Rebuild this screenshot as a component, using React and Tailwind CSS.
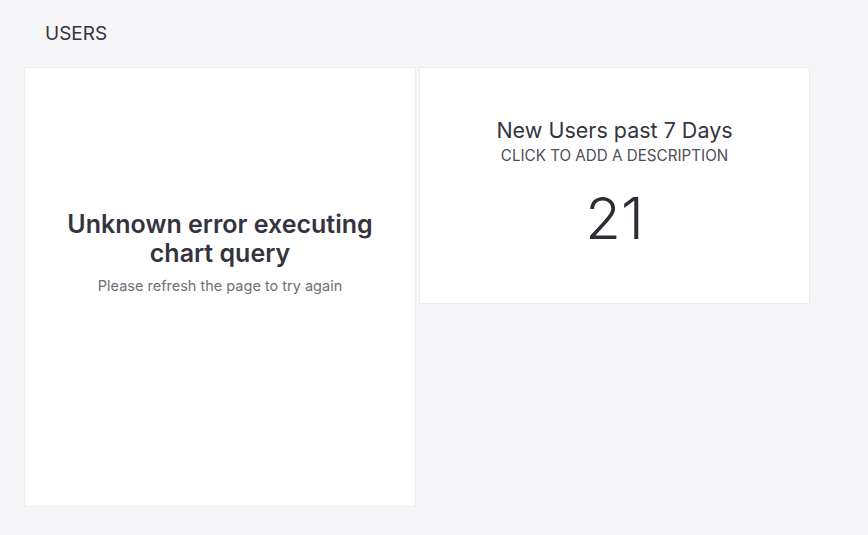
export default function App() {
  return (
    <main
      className="h-[535px] w-full overflow-hidden bg-[#f6f6f8] text-[#34343c]"
      style={{ fontFamily: 'Inter, "Open Sans", sans-serif' }}
    >
      {/* Section header */}
      <div className="pl-[45px] pt-[22px] pb-[21px]">
        <h2 className="text-[19px] leading-[24px]">USERS</h2>
      </div>

      {/* Cards */}
      <div className="grid grid-cols-[392px_391px] gap-[3px] pl-[24px] items-start">
        <div className="h-[440px] bg-white border border-[#ececf0] flex flex-col items-center justify-center text-center pb-[68px]">
          <h3 className="text-[25px] leading-[29px] font-semibold text-[#34343e] w-[340px]">
            Unknown error executing chart query
          </h3>
          <p className="mt-[7px] text-[14.5px] text-[#6f7077]">Please refresh the page to try again</p>
        </div>

        <div className="h-[237px] bg-white border border-[#ececf0] flex flex-col items-center pt-[49px] text-center">
          <h3 className="text-[21.5px] leading-[26px] text-[#34343e]">New Users past 7 Days</h3>
          <p className="text-[15.2px] leading-[18px] text-[#4e4e57] mt-[4px]">CLICK TO ADD A DESCRIPTION</p>
          <div className="mt-[22px] text-[58px] leading-[62px] font-light text-[#2d2d33]">21</div>
        </div>
      </div>
    </main>
  )
}
